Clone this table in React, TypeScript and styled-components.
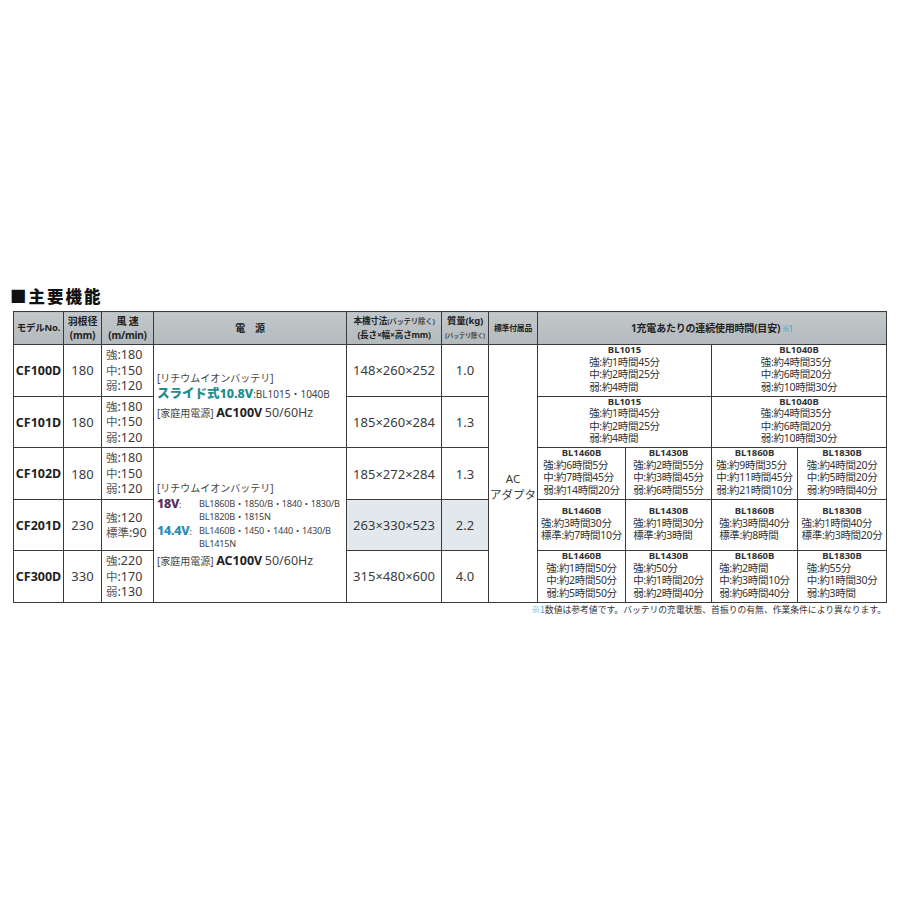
import React from "react";
import styled, { createGlobalStyle } from "styled-components";

const GlobalStyle = createGlobalStyle`
  html, body { margin: 0; padding: 0; background: #ffffff; }
  body { font-family: "Noto Sans", "Noto Sans CJK JP", sans-serif; color: #2e2e2e; }
`;

const Page = styled.div`
  width: 900px;
  height: 900px;
  padding: 285px 0 0 10px;
  box-sizing: border-box;
`;

const Title = styled.h2`
  margin: 0 0 4px 0;
  font-family: "Noto Sans CJK JP", sans-serif;
  font-size: 16.5px;
  line-height: 22px;
  font-weight: 900;
  letter-spacing: 2px;
  color: #111;
`;

const Table = styled.table`
  margin-left: 3px;
  width: 873px;
  table-layout: fixed;
  border-collapse: collapse;
  border: 1.5px solid #333;
`;

const HeadRow = styled.tr`
  height: 33px;
`;

const BodyRow = styled.tr`
  height: 51px;
`;

const Th = styled.th<{ $size?: number }>`
  background: linear-gradient(#c3c8ca, #b3babd);
  border: 1px solid #3a3a3a;
  padding: 0;
  font-size: ${(p) => p.$size ?? 9.5}px;
  line-height: 14px;
  font-weight: 700;
  color: #222;
  text-align: center;
  vertical-align: middle;
  white-space: nowrap;
  letter-spacing: -0.2px;
`;

const Small = styled.span<{ $size?: number }>`
  font-size: ${(p) => p.$size ?? 7}px;
  font-weight: 500;
  letter-spacing: -0.3px;
`;

const Ref = styled.span`
  color: #3aa6d6;
  font-weight: 400;
  font-size: 8px;
  margin-left: 2px;
`;

const Td = styled.td<{ $shade?: boolean }>`
  border: 1px solid #3a3a3a;
  padding: 0 2px;
  vertical-align: middle;
  text-align: center;
  background: ${(p) => (p.$shade ? "#e2e8ec" : "#ffffff")};
`;

const Model = styled(Td)`
  font-size: 12.5px;
  font-weight: 700;
  color: #1e1e1e;
  padding: 0;
  white-space: nowrap;
`;

const Num = styled(Td)`
  font-size: 13px;
  color: #3a3a3a;
  white-space: nowrap;
  padding: 0;
`;

const Wind = styled(Td)`
  font-size: 12.5px;
  line-height: 15.5px;
  color: #3a3a3a;
  text-align: left;
  padding-left: 4px;
  white-space: nowrap;
`;

const Lab = styled.span`
  color: #555;
  font-size: 11.5px;
`;

const Power = styled(Td)`
  text-align: left;
  padding: 0 2px 0 3px;
  color: #444;
  white-space: nowrap;
`;

const PLine = styled.div<{ $gap?: number }>`
  font-size: 10px;
  line-height: 15px;
  margin-top: ${(p) => p.$gap ?? 0}px;
`;

const Volt = styled.span<{ $c: string }>`
  color: ${(p) => p.$c};
  font-weight: 800;
  font-size: 12.5px;
`;

const Strong = styled.span`
  font-weight: 700;
  font-size: 12.5px;
  color: #222;
`;

const Reg = styled.span`
  font-size: 12.5px;
  color: #444;
`;

const VoltGrid = styled.div`
  display: grid;
  grid-template-columns: 42px 1fr;
  align-items: start;
  font-size: 9.2px;
  line-height: 13px;
  letter-spacing: -0.25px;
`;

const VoltLabel = styled.div`
  line-height: 15px;
  white-space: nowrap;
`;

const VoltList = styled.div`
  padding-top: 1px;
`;

const Acc = styled(Td)`
  font-size: 11.5px;
  line-height: 16px;
  color: #3a3a3a;
  padding: 28px 0 0 0;
  white-space: nowrap;
`;

const Time = styled(Td)`
  padding: 0 1px;
  white-space: nowrap;
`;

const BName = styled.div`
  font-size: 9.5px;
  line-height: 10.5px;
  font-weight: 700;
  color: #333;
`;

const TLines = styled.div`
  display: inline-block;
  text-align: left;
  font-size: 10.5px;
  line-height: 12.6px;
  color: #333;
  letter-spacing: -0.3px;
`;

const Foot = styled.div`
  width: 876px;
  text-align: right;
  font-family: "Noto Sans CJK JP", sans-serif;
  font-size: 8.8px;
  line-height: 12px;
  color: #333;
  margin-top: 1px;
`;

const FootRef = styled.span`
  color: #3aa6d6;
`;

const cols = [50, 38, 52, 193, 95, 47, 49, 88, 86, 86, 89];

type Cell = { name: string; lines: string[] };

const TimeCell: React.FC<{ c: Cell; span?: number }> = ({ c, span }) => (
  <Time colSpan={span}>
    <BName>{c.name}</BName>
    <TLines>
      {c.lines.map((l, i) => (
        <div key={i}>{l}</div>
      ))}
    </TLines>
  </Time>
);

const WindVals: React.FC<{ v: [string, string][] }> = ({ v }) => (
  <>
    {v.map(([k, n], i) => (
      <div key={i}>
        <Lab>{k}</Lab>:{n}
      </div>
    ))}
  </>
);

const bl10: Cell[] = [
  { name: "BL1015", lines: ["強:約1時間45分", "中:約2時間25分", "弱:約4時間"] },
  { name: "BL1040B", lines: ["強:約4時間35分", "中:約6時間20分", "弱:約10時間30分"] },
];

const row3: Cell[] = [
  { name: "BL1460B", lines: ["強:約6時間5分", "中:約7時間45分", "弱:約14時間20分"] },
  { name: "BL1430B", lines: ["強:約2時間55分", "中:約3時間45分", "弱:約6時間55分"] },
  { name: "BL1860B", lines: ["強:約9時間35分", "中:約11時間45分", "弱:約21時間10分"] },
  { name: "BL1830B", lines: ["強:約4時間20分", "中:約5時間20分", "弱:約9時間40分"] },
];

const row4: Cell[] = [
  { name: "BL1460B", lines: ["強:約3時間30分", "標準:約7時間10分"] },
  { name: "BL1430B", lines: ["強:約1時間30分", "標準:約3時間"] },
  { name: "BL1860B", lines: ["強:約3時間40分", "標準:約8時間"] },
  { name: "BL1830B", lines: ["強:約1時間40分", "標準:約3時間20分"] },
];

const row5: Cell[] = [
  { name: "BL1460B", lines: ["強:約1時間50分", "中:約2時間50分", "弱:約5時間50分"] },
  { name: "BL1430B", lines: ["強:約50分", "中:約1時間20分", "弱:約2時間40分"] },
  { name: "BL1860B", lines: ["強:約2時間", "中:約3時間10分", "弱:約6時間40分"] },
  { name: "BL1830B", lines: ["強:約55分", "中:約1時間30分", "弱:約3時間"] },
];

const std: [string, string][] = [
  ["強", "180"],
  ["中", "150"],
  ["弱", "120"],
];

export default function App() {
  return (
    <Page>
      <GlobalStyle />
      <Title>■主要機能</Title>
      <Table>
        <colgroup>
          {cols.map((w, i) => (
            <col key={i} style={{ width: w }} />
          ))}
        </colgroup>
        <thead>
          <HeadRow>
            <Th $size={9.5}>モデルNo.</Th>
            <Th $size={10}>
              羽根径
              <br />
              (mm)
            </Th>
            <Th $size={10}>
              風 速
              <br />
              (m/min)
            </Th>
            <Th $size={10}>電　源</Th>
            <Th $size={8.6}>
              本機寸法<Small $size={7.5}>(バッテリ除く)</Small>
              <br />
              (長さ×幅×高さmm)
            </Th>
            <Th $size={9.5}>
              質量(kg)
              <br />
              <Small $size={6.3}>(バッテリ除く)</Small>
            </Th>
            <Th $size={7.8}>標準付属品</Th>
            <Th colSpan={4} $size={10}>
              1充電あたりの連続使用時間(目安)<Ref>※1</Ref>
            </Th>
          </HeadRow>
        </thead>
        <tbody>
          <BodyRow>
            <Model>CF100D</Model>
            <Num>180</Num>
            <Wind>
              <WindVals v={std} />
            </Wind>
            <Power rowSpan={2}>
              <PLine>[リチウムイオンバッテリ]</PLine>
              <PLine>
                <Volt $c="#1f8c8e">スライド式10.8V</Volt>:BL1015・1040B
              </PLine>
              <PLine $gap={3}>
                [家庭用電源] <Strong>AC100V</Strong> <Reg>50/60Hz</Reg>
              </PLine>
            </Power>
            <Num>148×260×252</Num>
            <Num>1.0</Num>
            <Acc rowSpan={5}>
              AC
              <br />
              アダプタ
            </Acc>
            <TimeCell c={bl10[0]} span={2} />
            <TimeCell c={bl10[1]} span={2} />
          </BodyRow>
          <BodyRow>
            <Model>CF101D</Model>
            <Num>180</Num>
            <Wind>
              <WindVals v={std} />
            </Wind>
            <Num>185×260×284</Num>
            <Num>1.3</Num>
            <TimeCell c={bl10[0]} span={2} />
            <TimeCell c={bl10[1]} span={2} />
          </BodyRow>
          <BodyRow>
            <Model>CF102D</Model>
            <Num>180</Num>
            <Wind>
              <WindVals v={std} />
            </Wind>
            <Power rowSpan={3}>
              <PLine>[リチウムイオンバッテリ]</PLine>
              <VoltGrid>
                <VoltLabel>
                  <Volt $c="#5a2c5e">18V</Volt>:
                </VoltLabel>
                <VoltList>
                  BL1860B・1850/B・1840・1830/B
                  <br />
                  BL1820B・1815N
                </VoltList>
                <VoltLabel>
                  <Volt $c="#2a8db4">14.4V</Volt>:
                </VoltLabel>
                <VoltList>
                  BL1460B・1450・1440・1430/B
                  <br />
                  BL1415N
                </VoltList>
              </VoltGrid>
              <PLine $gap={3}>
                [家庭用電源] <Strong>AC100V</Strong> <Reg>50/60Hz</Reg>
              </PLine>
            </Power>
            <Num>185×272×284</Num>
            <Num>1.3</Num>
            {row3.map((c, i) => (
              <TimeCell key={i} c={c} />
            ))}
          </BodyRow>
          <BodyRow>
            <Model>CF201D</Model>
            <Num>230</Num>
            <Wind>
              <WindVals
                v={[
                  ["強", "120"],
                  ["標準", "90"],
                ]}
              />
            </Wind>
            <Num $shade>263×330×523</Num>
            <Num $shade>2.2</Num>
            {row4.map((c, i) => (
              <TimeCell key={i} c={c} />
            ))}
          </BodyRow>
          <BodyRow>
            <Model>CF300D</Model>
            <Num>330</Num>
            <Wind>
              <WindVals
                v={[
                  ["強", "220"],
                  ["中", "170"],
                  ["弱", "130"],
                ]}
              />
            </Wind>
            <Num>315×480×600</Num>
            <Num>4.0</Num>
            {row5.map((c, i) => (
              <TimeCell key={i} c={c} />
            ))}
          </BodyRow>
        </tbody>
      </Table>
      <Foot>
        <FootRef>※1</FootRef>数値は参考値です。バッテリの充電状態、首振りの有無、作業条件により異なります。
      </Foot>
    </Page>
  );
}
